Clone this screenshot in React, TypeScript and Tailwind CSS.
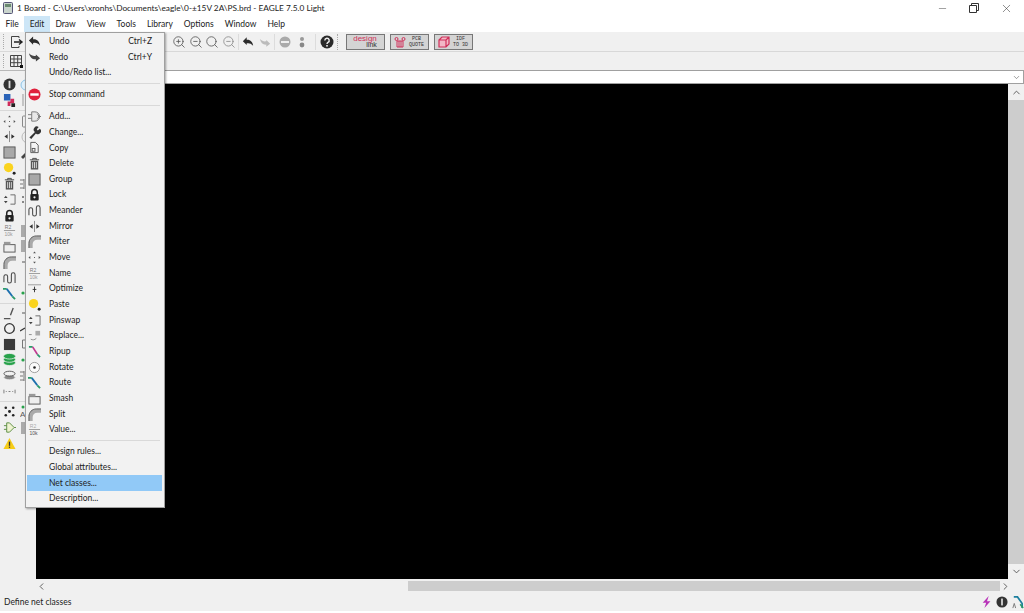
import type { ReactNode } from 'react'
import { ChevronDown, ChevronLeft, ChevronRight, ChevronUp, Minus, X, ZoomIn, ZoomOut, Search } from 'lucide-react'

const menus = ['File', 'Edit', 'Draw', 'View', 'Tools', 'Library', 'Options', 'Window', 'Help']

// small hand drawn toolbar glyphs, 14x14 box
function Glyph({ name, size = 14 }: { name: string; size?: number }) {
  const body: Record<string, ReactNode> = {
    undo: <path d="M1 6 L5.5 1.5 V4.5 C9.5 4 12.5 7 13 11.5 C10.5 8.5 8.5 8 5.5 8.5 V10.5 Z" fill="#2b2b2b" />,
    redo: <path d="M13 9 L8.5 12.5 V10 C5 10.5 2 8 1 3.5 C3.5 6 6 6.8 8.5 6.2 V4.8 Z" fill="#444" />,
    stop: (
      <>
        <circle cx="7" cy="7" r="6.5" fill="#e0203c" />
        <rect x="2.5" y="5.7" width="9" height="2.6" fill="#fff" />
      </>
    ),
    add: (
      <>
        <path d="M0 5h4M0 9h4M4 2h3.5a5 5 0 0 1 0 10H4z" fill="#e8e8e8" stroke="#777" />
        <path d="M10 4l2 3-2 3M11 7h3" stroke="#777" fill="none" />
      </>
    ),
    change: <path d="M1.5 12.5 L7.5 6.5 A3.2 3.2 0 0 1 11.5 1.2 L9.5 3.5 L10.5 4.8 L12.8 3 A3.2 3.2 0 0 1 8.5 8 L3.5 14 Z" fill="#333" />,
    copy: (
      <>
        <path d="M3 1.5h5l3 3v8H3z" fill="#f4f4f4" stroke="#555" />
        <rect x="4.5" y="8" width="3" height="3" fill="none" stroke="#555" />
      </>
    ),
    delete: (
      <>
        <path d="M2 3h10M5 3V1.5h4V3" stroke="#444" fill="none" />
        <path d="M3 4h8v9.5H3z" fill="#555" />
        <path d="M5 5.5v6.5M7 5.5v6.5M9 5.5v6.5" stroke="#ddd" />
      </>
    ),
    group: <rect x="1" y="1" width="12" height="12" fill="#a8a8a8" stroke="#555" />,
    lock: (
      <>
        <path d="M4 7V4.5a3 3 0 0 1 6 0V7" fill="none" stroke="#222" strokeWidth="1.6" />
        <rect x="2.5" y="6.5" width="9" height="7" rx="1" fill="#222" />
        <circle cx="7" cy="10" r="1.2" fill="#eee" />
      </>
    ),
    meander: <path d="M1 12V6a2 2 0 0 1 4 0v5a2 2 0 0 0 4 0V4a2 2 0 0 1 4 0v9" fill="none" stroke="#444" strokeWidth="1.1" />,
    mirror: (
      <>
        <path d="M7 1v12" stroke="#888" />
        <path d="M5 4.5v5L1.5 7zM9 4.5v5L12.5 7z" fill="#333" />
      </>
    ),
    miter: (
      <>
        <path d="M1 14V9C1 5 4 1 9 1h5v4H10C7 5 5 7 5 10v4z" fill="#aaa" />
        <path d="M1 14V9C1 5 4 1 9 1h5" fill="none" stroke="#555" />
      </>
    ),
    move: (
      <path
        d="M7 0.5l1.5 2h-3zM7 13.5l1.5-2h-3zM0.5 7l2-1.5v3zM13.5 7l-2-1.5v3zM6.5 6.5h1v1h-1z"
        fill="#555"
      />
    ),
    name: (
      <>
        <text x="2" y="5.5" fontSize="5.5" fill="#777" fontFamily="Liberation Sans">
          R2
        </text>
        <path d="M1 7h12" stroke="#999" />
        <text x="1.5" y="12.5" fontSize="5.5" fill="#999" fontFamily="Liberation Sans">
          10k
        </text>
      </>
    ),
    optimize: (
      <>
        <path d="M0 3h14" stroke="#999" />
        <path d="M7 5v6M5 8h4" stroke="#333" />
      </>
    ),
    paste: (
      <>
        <circle cx="6" cy="6" r="5" fill="#fad31e" />
        <circle cx="12" cy="12" r="1.6" fill="#222" />
      </>
    ),
    pinswap: (
      <>
        <path d="M8 2h5v10H8" fill="none" stroke="#666" />
        <path d="M3 3l2 2.5H1zM3 11L1 8.5h4z" fill="#444" />
      </>
    ),
    replace: (
      <>
        <rect x="8" y="2" width="5" height="5" fill="#aaa" />
        <path d="M1 6h3M3 11c2 1 4 1 6-1" stroke="#888" fill="none" />
      </>
    ),
    ripup: (
      <>
        <path d="M1 2h4M10 10l3 3" stroke="#2a9a6a" strokeWidth="1.8" fill="none" />
        <path d="M5 2l5 8" stroke="#c03a90" strokeWidth="1.8" />
      </>
    ),
    rotate: (
      <>
        <circle cx="7" cy="7" r="5.5" fill="#fafafa" stroke="#999" />
        <circle cx="7" cy="7" r="1.4" fill="#222" />
      </>
    ),
    route: (
      <>
        <path d="M0 2h4M10 10l3 3" stroke="#2a9a6a" strokeWidth="2" fill="none" />
        <path d="M4 2l6 8" stroke="#1c6fae" strokeWidth="2" />
      </>
    ),
    smash: (
      <>
        <rect x="1" y="5" width="12" height="8" fill="#eee" stroke="#555" />
        <rect x="1" y="2" width="7" height="3" fill="#999" />
      </>
    ),
    value: (
      <>
        <text x="2" y="5.5" fontSize="5.5" fill="#aaa" fontFamily="Liberation Sans">
          R2
        </text>
        <path d="M1 7h12" stroke="#999" />
        <text x="1.5" y="12.5" fontSize="5.5" fill="#555" fontFamily="Liberation Sans">
          10k
        </text>
      </>
    ),
    info: (
      <>
        <circle cx="7" cy="7" r="6.5" fill="#333" />
        <rect x="6" y="3" width="2" height="8" fill="#ddd" />
      </>
    ),
    layers: (
      <>
        <rect x="1" y="0" width="7" height="7" fill="#2a63b8" />
        <path d="M8 5h4v5H8v3H5V8h3z" fill="#d02a5a" />
        <rect x="9" y="10" width="4" height="4" fill="#222" />
      </>
    ),
    circle: <circle cx="7" cy="7" r="5.2" fill="none" stroke="#333" strokeWidth="1.4" />,
    rect: <rect x="1" y="1" width="12" height="12" fill="#3a3a3a" />,
    line: <path d="M1 12.5h7M8 9l3-8" stroke="#555" strokeWidth="1.5" />,
    greenStack: (
      <>
        <ellipse cx="7" cy="10.5" rx="6.5" ry="3" fill="#28a24b" stroke="#f0f0f0" strokeWidth="0.8" />
        <ellipse cx="7" cy="7" rx="6.5" ry="3" fill="#28a24b" stroke="#f0f0f0" strokeWidth="0.8" />
        <ellipse cx="7" cy="3.5" rx="6.5" ry="3" fill="#28a24b" stroke="#f0f0f0" strokeWidth="0.8" />
      </>
    ),
    grayStack: (
      <>
        <ellipse cx="7" cy="9" rx="6" ry="2.6" fill="#888" stroke="#f0f0f0" strokeWidth="0.8" />
        <ellipse cx="7" cy="5" rx="6" ry="2.6" fill="#f0f0f0" stroke="#555" />
      </>
    ),
    dim: <path d="M1 5v4M13 5v4M3 7h1M6 7h2M10 7h1" stroke="#777" />,
    dots: (
      <>
        <circle cx="3" cy="3" r="1.4" fill="#222" />
        <circle cx="11" cy="3" r="1.4" fill="#222" />
        <circle cx="7" cy="7" r="1.6" fill="#222" />
        <circle cx="3" cy="11" r="1.4" fill="#222" />
        <circle cx="11" cy="11" r="1.4" fill="#222" />
      </>
    ),
    gate: <path d="M4 2h3l5 5-5 5H4zM1 5h3M1 9h3M12 7h2" fill="#eef3d0" stroke="#5a8a40" />,
    warn: (
      <>
        <path d="M7 1l6.5 12H.5z" fill="#f6cc17" />
        <rect x="6.3" y="5" width="1.4" height="4.5" fill="#333" />
        <rect x="6.3" y="10.3" width="1.4" height="1.4" fill="#333" />
      </>
    ),
    bolt: <path d="M9 0L2 8h4l-2 6 7-8H7z" fill="#b832b8" />,
    help: (
      <>
        <circle cx="7" cy="7" r="6.5" fill="#2a2a2a" />
        <path d="M4.8 5.4a2.2 2.2 0 1 1 3.2 2c-.7.4-1 .8-1 1.6" fill="none" stroke="#eee" strokeWidth="1.4" />
        <rect x="6.2" y="10" width="1.6" height="1.6" fill="#eee" />
      </>
    ),
    grid: (
      <>
        <path d="M1.5 1.5h11v11h-11zM5 1.5v11M8.7 1.5v11M1.5 5h11M1.5 8.7h11" fill="none" stroke="#444" />
        <rect x="11" y="11" width="3" height="3" fill="#111" />
      </>
    ),
    exec: (
      <>
        <path d="M9 3V1.5H1.5v11H9V11" fill="none" stroke="#444" />
        <path d="M4 7h7M9 4.5L12 7 9 9.5" fill="none" stroke="#222" strokeWidth="1.4" />
      </>
    ),
    autoroute: (
      <>
        <path d="M3 1h4l5 7v5" stroke="#1c7f9e" strokeWidth="1.8" fill="none" />
        <path d="M10 9l3 4" stroke="#2a9a6a" strokeWidth="1.8" />
        <path d="M2 13l1.5-5 1.5 5" stroke="#777" fill="none" />
      </>
    ),
    // second rail column, only the left few pixels show beside the menu
    sBlue: <circle cx="6" cy="7" r="5" fill="#dff0fb" stroke="#8cc4e8" />,
    sLine: <path d="M3 1v12" stroke="#999" />,
    sBox: <rect x="2.5" y="2" width="8" height="11" fill="none" stroke="#888" rx="1" />,
    sArc: <circle cx="8" cy="7" r="6" fill="none" stroke="#bbb" />,
    sPen: <path d="M1 12l4-4 2 2-4 4z" fill="#444" />,
    sBars: <path d="M0 7h3M4 2v10M0 3h4M0 11h4" stroke="#777" />,
    sDots: <path d="M2 4h2v2H2zM2 9h2v2H2z" fill="#888" />,
    sGray: <rect x="1" y="1" width="5" height="12" fill="#aaa" />,
    sDash: <path d="M2 7h4" stroke="#555" />,
    sCurve: <path d="M0 9l5-3" stroke="#333" strokeWidth="1.3" />,
    sGreen: <circle cx="3" cy="7" r="1.6" fill="#28a24b" />,
    sBracket: <path d="M6 3H2.5v8H6" fill="none" stroke="#777" />,
    sText: (
      <>
        <circle cx="3" cy="2" r="1.5" fill="#28a24b" />
        <text x="0" y="12" fontSize="8" fill="#555" fontFamily="Liberation Sans">
          A
        </text>
      </>
    ),
  }
  return (
    <svg width={size} height={size} viewBox="0 0 14 14" className="shrink-0">
      {body[name]}
    </svg>
  )
}

type Item =
  | { sep: true }
  | { sep?: false; label: string; icon?: string; key2?: string; hot?: boolean }

const items: Item[] = [
  { label: 'Undo', icon: 'undo', key2: 'Ctrl+Z' },
  { label: 'Redo', icon: 'redo', key2: 'Ctrl+Y' },
  { label: 'Undo/Redo list...' },
  { sep: true },
  { label: 'Stop command', icon: 'stop' },
  { sep: true },
  { label: 'Add...', icon: 'add' },
  { label: 'Change...', icon: 'change' },
  { label: 'Copy', icon: 'copy' },
  { label: 'Delete', icon: 'delete' },
  { label: 'Group', icon: 'group' },
  { label: 'Lock', icon: 'lock' },
  { label: 'Meander', icon: 'meander' },
  { label: 'Mirror', icon: 'mirror' },
  { label: 'Miter', icon: 'miter' },
  { label: 'Move', icon: 'move' },
  { label: 'Name', icon: 'name' },
  { label: 'Optimize', icon: 'optimize' },
  { label: 'Paste', icon: 'paste' },
  { label: 'Pinswap', icon: 'pinswap' },
  { label: 'Replace...', icon: 'replace' },
  { label: 'Ripup', icon: 'ripup' },
  { label: 'Rotate', icon: 'rotate' },
  { label: 'Route', icon: 'route' },
  { label: 'Smash', icon: 'smash' },
  { label: 'Split', icon: 'miter' },
  { label: 'Value...', icon: 'value' },
  { sep: true },
  { label: 'Design rules...' },
  { label: 'Global attributes...' },
  { label: 'Net classes...', hot: true },
  { label: 'Description...' },
]

// left rail: two columns of tools, the menu hides most of the second one
const rail: { icon: string; side?: string; sep?: string }[] = [
  { icon: 'info', side: 'sBlue' },
  { icon: 'layers', side: 'sLine' },
  { icon: 'move', side: 'sBox', sep: 'my-[2px]' },
  { icon: 'mirror', side: 'sArc' },
  { icon: 'group', side: 'sPen' },
  { icon: 'paste' },
  { icon: 'delete', side: 'sBars' },
  { icon: 'pinswap', side: 'sDots' },
  { icon: 'lock' },
  { icon: 'name', side: 'sGray' },
  { icon: 'smash', side: 'sGray' },
  { icon: 'miter', side: 'sDash' },
  { icon: 'meander' },
  { icon: 'route', side: 'sGreen' },
  { icon: 'line', side: 'sDash', sep: 'my-[1.5px]' },
  { icon: 'circle', side: 'sCurve' },
  { icon: 'rect', side: 'sBracket' },
  { icon: 'greenStack', side: 'sGreen' },
  { icon: 'grayStack', side: 'sBars' },
  { icon: 'dim' },
  { icon: 'dots', side: 'sText', sep: 'my-[2px]' },
  { icon: 'gate', side: 'sGray' },
  { icon: 'warn' },
]

function EditMenu() {
  return (
    <div className="absolute left-[25px] top-[32px] z-10 flex h-[476px] w-[140px] flex-col border border-[#a0a0a0] bg-[#f2f2f2] pl-[1px] pr-[2px] pt-[0.5px] shadow-[1px_1px_2px_rgba(0,0,0,0.35)]">
      {items.map((item, i) =>
        item.sep ? (
          <div key={i} className="my-[2.67px] ml-[21px] mr-[2px] h-[1px] shrink-0 bg-[#d9d9d9]" />
        ) : (
          <div
            key={i}
            className={`flex h-[15.66px] shrink-0 items-center ${item.hot ? 'bg-[#91c9f7]' : ''}`}
          >
            <div className="ml-[1px] flex w-[21px]">{item.icon && <Glyph name={item.icon} size={13} />}</div>
            <span>{item.label}</span>
            {item.key2 && <span className="ml-auto mr-[10px]">{item.key2}</span>}
          </div>
        ),
      )}
    </div>
  )
}

function LinkButton({ children }: { children: ReactNode }) {
  return (
    <div className="flex h-[16px] w-[39px] items-center justify-center gap-[3px] border border-[#777] bg-[#d4d4d4]">
      {children}
    </div>
  )
}

function ToolSep() {
  return <div className="h-[16px] w-[1px] bg-[#dcdcdc]" />
}

export default function App() {
  return (
    <div className="relative flex h-[613px] w-[1024px] flex-col overflow-hidden bg-white font-['Lato','Noto_Sans',sans-serif] text-[8.5px] text-[#222]">
      {/* title bar */}
      <div className="flex h-[16px] shrink-0 items-center bg-white pl-[3px] text-[8.3px]">
        <svg width="10" height="12" viewBox="0 0 10 12" className="mr-[4px]">
          <rect x="0.5" y="0.5" width="9" height="11" rx="1" fill="#c9d4cc" stroke="#557" />
          <rect x="2" y="2" width="6" height="3" fill="#6a8a70" />
        </svg>
        <span>1 Board - C:\Users\xronhs\Documents\eagle\0-±15V 2A\PS.brd - EAGLE 7.5.0 Light</span>
        <div className="ml-auto flex items-center pr-[2px] text-[#333]">
          <div className="flex w-[32px] justify-center">
            <Minus size={11} strokeWidth={1} />
          </div>
          <div className="flex w-[32px] justify-center">
            <svg width="10" height="10" viewBox="0 0 10 10" fill="none" stroke="#333">
              <path d="M0.5 2.5h7v7h-7zM2.5 2.5v-2h7v7h-2" />
            </svg>
          </div>
          <div className="flex w-[32px] justify-center">
            <X size={13} strokeWidth={1} />
          </div>
        </div>
      </div>

      {/* menu bar */}
      <div className="flex h-[16px] shrink-0 items-center bg-white">
        {menus.map((m) => (
          <div
            key={m}
            className={`flex h-full items-center px-[5.5px] ${m === 'Edit' ? 'bg-[#cde6f7]' : ''}`}
          >
            {m}
          </div>
        ))}
      </div>

      {/* main toolbar */}
      <div className="flex h-[20px] shrink-0 items-center border-b border-[#d8d8d8] bg-[#f0f0f0] pl-[3px]">
        <div className="mr-[6px] h-[15px] border-l border-dotted border-[#aaa]" />
        <Glyph name="exec" />
        <div className="ml-[148px] flex items-center gap-[2.5px] text-[#555]">
          <ZoomIn size={14} strokeWidth={1.4} />
          <ZoomOut size={14} strokeWidth={1.4} />
          <Search size={14} strokeWidth={1.4} />
          <ZoomOut size={14} strokeWidth={1.4} className="text-[#888]" />
        </div>
        <div className="ml-[2px]">
          <ToolSep />
        </div>
        <div className="ml-[3px] flex items-center gap-[5px]">
          <Glyph name="undo" size={12} />
          <div className="opacity-30">
            <Glyph name="redo" size={12} />
          </div>
        </div>
        <div className="ml-[3px]">
          <ToolSep />
        </div>
        <div className="ml-[4px] flex items-center gap-[8px]">
          <svg width="12" height="12" viewBox="0 0 12 12">
            <circle cx="6" cy="6" r="5.5" fill="#aaa" />
            <rect x="2" y="5" width="8" height="2" fill="#eee" />
          </svg>
          <svg width="6" height="12" viewBox="0 0 6 12">
            <circle cx="3" cy="3" r="2" fill="#999" />
            <circle cx="3" cy="9" r="2.4" fill="#888" />
          </svg>
        </div>
        <div className="ml-[10px]">
          <ToolSep />
        </div>
        <div className="ml-[4px]">
          <Glyph name="help" />
        </div>
        <div className="ml-[3px] mr-[8px] h-[16px] border-l border-dotted border-[#aaa]" />
        <div className="flex items-center gap-[5px]">
          <LinkButton>
            <div className="flex flex-col font-['Liberation_Sans',sans-serif] leading-none">
              <span className="text-[8px] leading-[8px] text-[#d0305a]">design</span>
              <span className="-mt-[2px] self-end text-[7px] leading-[7px] text-[#333]">link</span>
            </div>
          </LinkButton>
          <LinkButton>
            <svg width="12" height="12" viewBox="0 0 12 12" fill="none" stroke="#d0305a">
              <circle cx="2.5" cy="3" r="1.5" />
              <circle cx="9.5" cy="3" r="1.5" />
              <path d="M3 5h6v6H3zM5 5v6M7 5v6" />
            </svg>
            <span className="text-center font-['Liberation_Mono',monospace] text-[5px] leading-[6px] text-[#333]">
              PCB
              <br />
              QUOTE
            </span>
          </LinkButton>
          <LinkButton>
            <svg width="12" height="12" viewBox="0 0 12 12" fill="#f2b8c6" stroke="#d0305a" strokeWidth="1.2">
              <path d="M1 4l3-3h7v7l-3 3H1zM1 4h7v7M8 4l3-3" />
            </svg>
            <span className="text-center font-['Liberation_Mono',monospace] text-[5px] leading-[6px] text-[#333]">
              IDF
              <br />
              TO 3D
            </span>
          </LinkButton>
        </div>
      </div>

      {/* second toolbar */}
      <div className="flex h-[18px] shrink-0 items-center bg-[#f0f0f0] pl-[3px]">
        <div className="mr-[5px] h-[14px] border-l border-dotted border-[#aaa]" />
        <Glyph name="grid" />
      </div>

      <div className="flex min-h-0 flex-1">
        {/* left rail */}
        <div className="flex w-[36px] shrink-0 flex-col overflow-hidden border-t border-[#b8b8b8] bg-[#f0f0f0] pt-[6px]">
          {rail.map((r) => (
            <div key={r.icon}>
              {r.sep && <div className={`${r.sep} h-[1px] bg-[#d8d8d8]`} />}
              <div className="flex h-[15.67px] items-center gap-[4px] pl-[3px]">
                <Glyph name={r.icon} size={13} />
                {r.side && <Glyph name={r.side} />}
              </div>
            </div>
          ))}
        </div>

        {/* command line, board and scrollbars */}
        <div className="flex min-w-0 flex-1 flex-col">
          <div className="flex h-[14px] shrink-0 items-center justify-end border border-[#a0a0a0] bg-white pr-[2px]">
            <ChevronDown size={9} strokeWidth={1.5} className="text-[#555]" />
          </div>
          <div className="flex min-h-0 flex-1">
            <div className="flex-1 bg-black" />
            <div className="flex w-[16px] shrink-0 flex-col items-center bg-[#f0f0f0] text-[#555]">
              <div className="flex h-[16px] items-center">
                <ChevronUp size={11} strokeWidth={2} />
              </div>
              <div className="w-full flex-1 bg-[#cdcdcd]" />
              <div className="flex h-[15px] items-center">
                <ChevronDown size={11} strokeWidth={2} />
              </div>
            </div>
          </div>
          <div className="flex h-[14px] shrink-0 items-center bg-[#f0f0f0] pr-[13px] text-[#555]">
            <ChevronLeft size={11} strokeWidth={2} />
            <div className="ml-[361px] h-[10px] flex-1 bg-[#cdcdcd]" />
            <ChevronRight size={11} strokeWidth={2} />
          </div>
        </div>
      </div>

      {/* status bar */}
      <div className="flex h-[18px] shrink-0 items-center bg-[#f0f0f0] pl-[4px]">
        <span>Define net classes</span>
        <div className="ml-auto flex items-center gap-[3px]">
          <Glyph name="bolt" size={12} />
          <Glyph name="info" size={12} />
          <Glyph name="autoroute" size={13} />
        </div>
      </div>
      <div className="h-[2px] shrink-0 bg-white" />

      <EditMenu />
    </div>
  )
}
